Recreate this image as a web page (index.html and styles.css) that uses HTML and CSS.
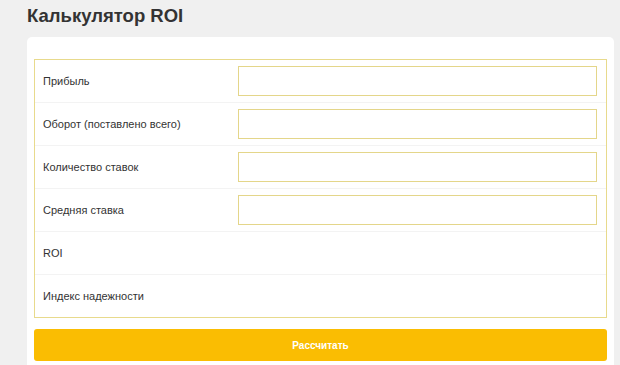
FILE: index.html
```html
<!DOCTYPE html>
<html lang="ru">

<head>
    <meta charset="UTF-8">
    <meta name="viewport" content="width=device-width, initial-scale=1.0">
    <title>Калькулятор ROI</title>
    <link rel="stylesheet" href="styles.css">
</head>

<body>
    <h1 class="page-title">Калькулятор ROI</h1>

    <div class="calc-card">
        <div class="calc-table">
            <div class="calc-row">
                <label class="calc-label" for="profit">Прибыль</label>
                <input class="calc-input" type="text" id="profit">
            </div>
            <div class="calc-row">
                <label class="calc-label" for="turnover">Оборот (поставлено всего)</label>
                <input class="calc-input" type="text" id="turnover">
            </div>
            <div class="calc-row">
                <label class="calc-label" for="bets">Количество ставок</label>
                <input class="calc-input" type="text" id="bets">
            </div>
            <div class="calc-row">
                <label class="calc-label" for="avg">Средняя ставка</label>
                <input class="calc-input" type="text" id="avg">
            </div>
            <div class="calc-row">
                <span class="calc-label">ROI</span>
                <span class="calc-value" id="roi"></span>
            </div>
            <div class="calc-row">
                <span class="calc-label">Индекс надежности</span>
                <span class="calc-value" id="index"></span>
            </div>
        </div>

        <button class="calc-button" onclick="calculate()">Рассчитать</button>
    </div>

    <script>
        function calculate() {
            const profit = parseFloat(document.getElementById('profit').value);
            const turnover = parseFloat(document.getElementById('turnover').value);
            if (!profit || !turnover) {
                return;
            }
            document.getElementById('roi').textContent = (profit / turnover * 100).toFixed(2) + '%';
        }
    </script>
</body>

</html>
```

FILE: styles.css
```css
body {
    font-family: 'Liberation Sans', Arial, sans-serif;
    margin: 0;
    padding: 0 6px 0 27px;
    background-color: #f0f0f0;
    color: #333;
}

.page-title {
    font-size: 18.5px;
    font-weight: bold;
    line-height: 22px;
    margin: 5px 0 10px;
    color: #333;
}

.calc-card {
    background-color: #fff;
    border-radius: 5px;
    padding: 22px 7px 12px;
}

.calc-table {
    border: 1px solid #e8da8c;
}

.calc-row {
    display: grid;
    grid-template-columns: 1fr 359px;
    align-items: center;
    height: 42px;
    padding: 0 9px 0 8px;
    border-bottom: 1px solid #f3f3f3;
}

.calc-row:last-child {
    border-bottom: none;
}

.calc-label {
    font-size: 11px;
    color: #333;
}

.calc-input {
    box-sizing: border-box;
    height: 30px;
    width: 100%;
    border: 1px solid #e4d68a;
    background-color: #fff;
    padding: 0 8px;
    font-size: 11px;
    outline: none;
}

.calc-value {
    font-size: 11px;
}

.calc-button {
    display: block;
    width: 100%;
    height: 32px;
    margin-top: 11px;
    border: none;
    border-radius: 3px;
    background-color: #fabd02;
    color: #fff;
    font-family: 'Liberation Sans', Arial, sans-serif;
    font-size: 10px;
    font-weight: bold;
    cursor: pointer;
}
```
